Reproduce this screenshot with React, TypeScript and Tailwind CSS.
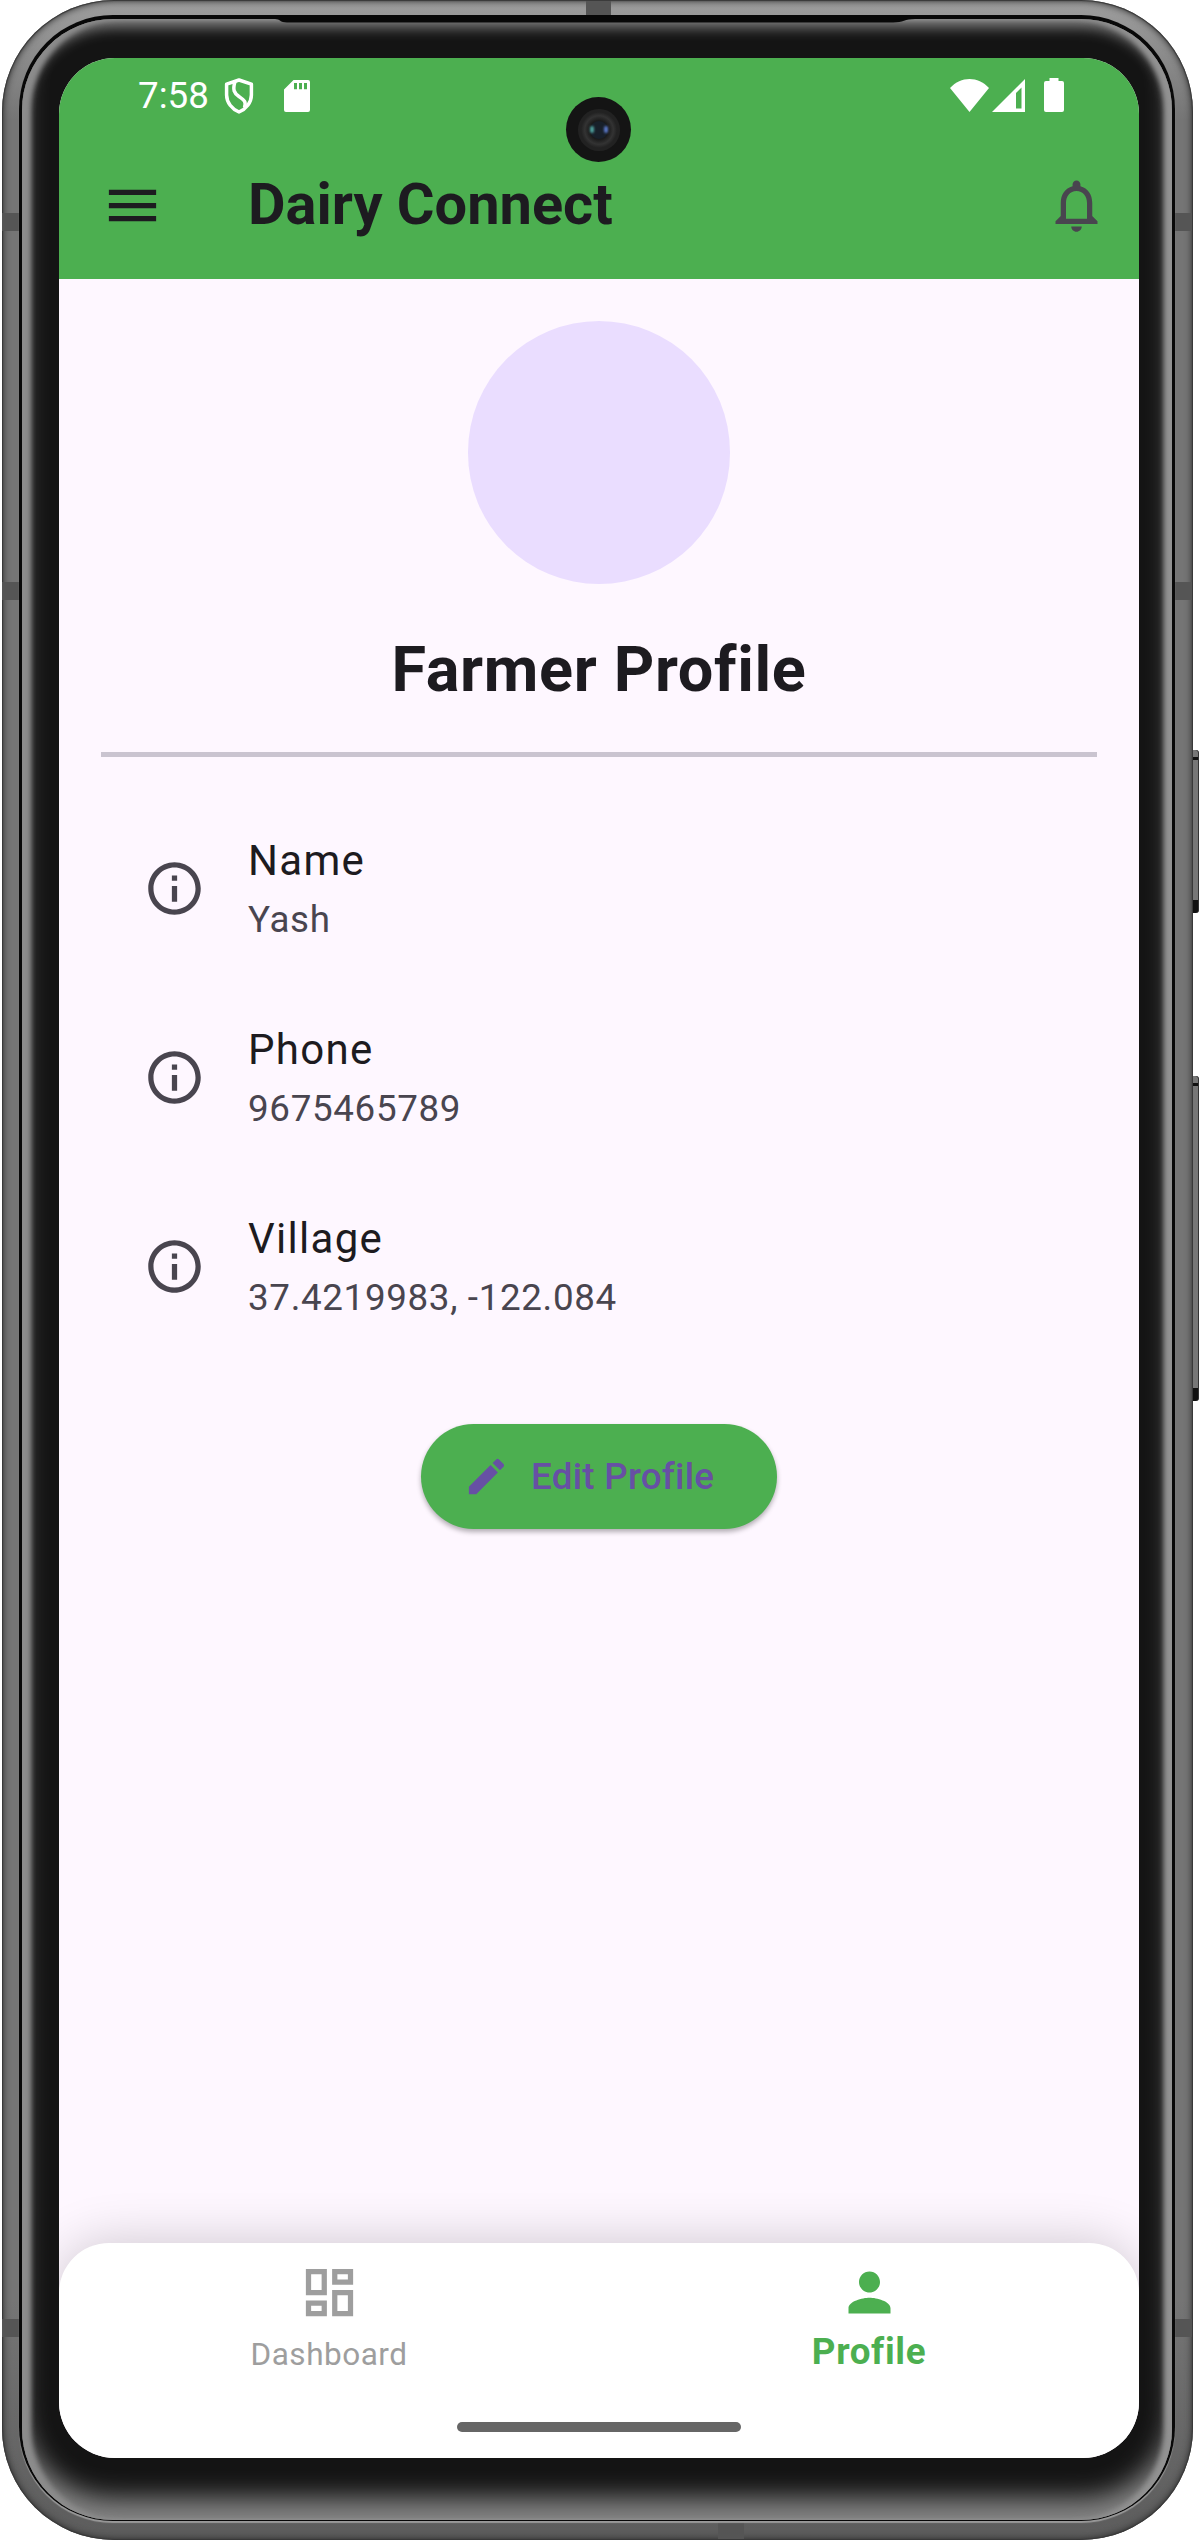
import React from "react";

const INFO =
  "M11 7h2v2h-2zm0 4h2v6h-2zm1-9C6.48 2 2 6.48 2 12s4.48 10 10 10 10-4.48 10-10S17.52 2 12 2zm0 18c-4.41 0-8-3.59-8-8s3.59-8 8-8 8 3.59 8 8-3.59 8-8 8z";
const MENU = "M3 18h18v-2H3v2zm0-5h18v-2H3v2zm0-7v2h18V6H3z";
const BELL =
  "M12 22c1.1 0 2-.9 2-2h-4c0 1.1.9 2 2 2zm6-6v-5c0-3.07-1.63-5.64-4.5-6.32V4c0-.83-.67-1.5-1.5-1.5s-1.5.67-1.5 1.5v.68C7.64 5.36 6 7.92 6 11v5l-2 2v1h16v-1l-2-2zm-2 1H8v-6c0-2.48 1.51-4.5 4-4.5s4 2.02 4 4.5v6z";
const EDIT =
  "M3 17.25V21h3.75L17.81 9.94l-3.75-3.75L3 17.25zM20.71 7.04c.39-.39.39-1.02 0-1.41l-2.34-2.34c-.39-.39-1.02-.39-1.41 0l-1.83 1.83 3.75 3.75 1.83-1.83z";
const DASHBOARD =
  "M19 5v2h-4V5h4M9 5v6H5V5h4m10 8v6h-4v-6h4M9 17v2H5v-2h4M21 3h-8v6h8V3zM11 3H3v10h8V3zm10 8h-8v10h8V11zm-10 4H3v6h8v-6z";
const PERSON =
  "M12 12c2.21 0 4-1.79 4-4s-1.79-4-4-4-4 1.79-4 4 1.79 4 4 4zm0 2c-2.67 0-8 1.34-8 4v2h16v-2c0-2.66-5.33-4-8-4z";

function Icon({ d, className }: { d: string; className: string }) {
  return (
    <svg viewBox="0 0 24 24" fill="currentColor" className={`shrink-0 ${className}`}>
      <path d={d} />
    </svg>
  );
}

function StatusBar() {
  return (
    <div className="flex h-[74px] items-center pl-[79px] pr-[75px] text-white">
      <span className="mt-[1px] w-[86px] text-[36.75px] leading-[42px]">7:58</span>
      <svg viewBox="0 0 30 36" className="mt-[2px] h-9 w-[30px]" fill="none" stroke="currentColor" strokeWidth="3.5" strokeLinejoin="round">
        <path d="M15 2 L27.4 6.2 V17 C27.4 24.5 22 31 15 34 C8 31 2.6 24.5 2.6 17 V6.2 Z" />
        <path d="M11 3.5 C8.5 12 10 15 15 18.5 C20 22 22.5 23.5 20.5 29.5" />
      </svg>
      <svg viewBox="0 0 26 32" className="ml-[30px] mt-[1px] h-8 w-[26px]" fill="currentColor">
        <path fillRule="evenodd" d="M9.5 0H24a2 2 0 0 1 2 2v28a2 2 0 0 1-2 2H2a2 2 0 0 1-2-2V9.500zM10 3v6.300h3V3zM15 3v6.300h3V3zM20 3v6.300h3V3z" />
      </svg>
      <div className="ml-auto flex items-center">
        <svg viewBox="0 0 39 33" className="h-[33px] w-[39px]" fill="currentColor">
          <path d="M0 9C11-3 28-3 39 9L19.500 33z" />
        </svg>
        <svg viewBox="0 0 33 33" className="ml-[3px] h-[33px] w-[33px]" fill="currentColor">
          <path fillRule="evenodd" d="M33 0V33H0zM24 14V29.500H29.500V8.500z" />
        </svg>
        <svg viewBox="0 0 20 34" className="ml-[19px] h-[34px] w-5" fill="currentColor">
          <path d="M5.500 0h9v3H18a2 2 0 0 1 2 2v27a2 2 0 0 1-2 2H2a2 2 0 0 1-2-2V5a2 2 0 0 1 2-2h3.500z" />
        </svg>
      </div>
    </div>
  );
}

function Header() {
  return (
    <header className="h-[221px] bg-[#4caf50]">
      <StatusBar />
      <div className="flex h-[147px] items-center pl-[42px] pr-[31px]">
        <Icon d={MENU} className="h-[63px] w-[63px] text-[#1d1b20]" />
        <h1 className="mb-[2px] ml-[84px] text-[57.75px] font-bold leading-[73px] text-[#1d1b20]">
          Dairy Connect
        </h1>
        <Icon d={BELL} className="ml-auto h-[63px] w-[63px] text-[#49454f]" />
      </div>
    </header>
  );
}

const DETAILS = [
  { label: "Name", value: "Yash" },
  { label: "Phone", value: "9675465789" },
  { label: "Village", value: "37.4219983, -122.084" },
];

function Profile() {
  return (
    <main className="flex flex-1 flex-col items-center px-[42px] pt-[42px]">
      <div className="h-[262.5px] w-[262.5px] shrink-0 rounded-full bg-[#eaddff]" />
      <h2 className="mt-[46px] text-[63px] font-bold leading-[80px] tracking-[0.66px] text-[#1d1b20]">
        Farmer Profile
      </h2>
      <div className="mt-[42.5px] h-[5px] w-full bg-[#cac4d0]" />
      <ul className="mt-[36.5px] w-full">
        {DETAILS.map(({ label, value }) => (
          <li key={label} className="flex h-[189px] items-center pl-[42px]">
            <Icon d={INFO} className="h-[63px] w-[63px] text-[#49454f]" />
            <div className="mb-[1px] ml-[42px]">
              <div className="text-[42px] leading-[63px] tracking-[1.3px] text-[#1d1b20]">{label}</div>
              <div className="mt-[1px] text-[36.75px] leading-[54px] tracking-[0.66px] text-[#49454f]">{value}</div>
            </div>
          </li>
        ))}
      </ul>
      <button className="mt-[63.5px] flex h-[105px] w-[356px] items-center rounded-full bg-[#4caf50] pl-[42px] text-[36.75px] font-medium leading-[53px] tracking-[0.26px] text-[#6750a4] shadow-[0_3px_5px_rgba(0,0,0,0.3)]">
        <Icon d={EDIT} className="mr-[21px] h-[47px] w-[47px]" />
        Edit Profile
      </button>
    </main>
  );
}

function BottomNav() {
  return (
    <nav className="flex h-[215px] flex-col items-center rounded-t-[50px] bg-white shadow-[0_0_52px_rgba(0,0,0,0.2)]">
      <div className="flex w-full">
        <div className="flex flex-1 flex-col items-center pt-[18px] text-[#9e9e9e]">
          <Icon d={DASHBOARD} className="h-[63px] w-[63px]" />
          <span className="mt-[10px] text-[31.5px] leading-[42px] tracking-[0.5px]">Dashboard</span>
        </div>
        <div className="flex flex-1 flex-col items-center pt-[18px] text-[#4caf50]">
          <Icon d={PERSON} className="h-[63px] w-[63px]" />
          <span className="mt-[7px] text-[36.75px] font-bold leading-[42px] tracking-[0.66px]">Profile</span>
        </div>
      </div>
      <div className="mb-[26px] mt-auto h-[10px] w-[284px] rounded-full bg-[#666]" />
    </nav>
  );
}

function SideButton({ className }: { className: string }) {
  return (
    <div className={`absolute left-[1191px] flex w-[8px] flex-col rounded-r-[3px] border-r border-[#333] bg-[#111] ${className}`}>
      <div className="h-[7px] rounded-tr-[3px] bg-[#777]" />
      <div className="mb-[13px] mt-[3px] flex-1 bg-[#777]" />
    </div>
  );
}

function AntennaBand({ className }: { className: string }) {
  return <div className={`absolute bg-[#555] ${className}`} />;
}

export default function App() {
  return (
    <div className="relative h-[2541px] w-[1200px] overflow-hidden bg-white font-['Roboto',sans-serif]">
      <SideButton className="top-[750px] h-[163px]" />
      <SideButton className="top-[1076px] h-[325px]" />
      <div className="relative ml-[1.5px] h-[2540px] w-[1191px] rounded-[112px] bg-[linear-gradient(#9e9e9e,#757575_120px,#757575_2300px,#5c5c5c)] pb-[19px] pl-[17.5px] pr-[17.5px] pt-[15px] shadow-[inset_0_0_7px_1px_#2d2d2d,inset_0_0_1px_1px_#444]">
        <AntennaBand className="left-[0.5px] top-[213px] h-[18px] w-[18px]" />
        <AntennaBand className="left-[0.5px] top-[582px] h-[18px] w-[18px]" />
        <AntennaBand className="left-[0.5px] top-[2319px] h-[18px] w-[18px]" />
        <AntennaBand className="right-[0.5px] top-[213px] h-[18px] w-[18px]" />
        <AntennaBand className="right-[0.5px] top-[582px] h-[18px] w-[18px]" />
        <AntennaBand className="right-[0.5px] top-[2319px] h-[18px] w-[18px]" />
        <AntennaBand className="left-[584px] top-[1px] h-[15px] w-[25px]" />
        <AntennaBand className="bottom-[1px] left-[716px] h-[18px] w-[26px]" />
        <div className="relative h-full rounded-[94px] bg-[#080808] pb-[1px] pl-[2.5px] pr-[3px] pt-[4px] shadow-[0_1.5px_1px_#999]">
          <div className="h-full rounded-[91px] bg-[#141414] pl-[37.5px] pt-[39px] shadow-[inset_9px_0_5px_#8c8c8c,inset_-8px_0_5px_#929292,inset_0_8px_14px_#858585,inset_0_-22px_26px_#858585]">
            <div className="relative flex h-[2400px] w-[1080px] flex-col overflow-hidden rounded-[56px] bg-[#fef7ff]">
              <Header />
              <Profile />
              <BottomNav />
              <div className="absolute left-[507px] top-[39px] flex h-[65px] w-[65px] items-center justify-center rounded-full bg-[#141414]">
                <div className="flex h-[42px] w-[42px] items-center justify-center rounded-full bg-[radial-gradient(circle_closest-side,#1b1b1b_45%,#333_68%,#222_85%)]">
                  <div className="flex h-[18px] w-[18px] items-center justify-between rounded-full bg-[#18202a]">
                    <div className="h-[7px] w-[4px] rounded-full bg-[#4fa09c] blur-[1px]" />
                    <div className="h-[7px] w-[4px] rounded-full bg-[#5a76c4] blur-[1px]" />
                  </div>
                </div>
              </div>
            </div>
          </div>
          <svg viewBox="0 0 640 7" className="absolute left-[256px] top-[1px] h-[7px] w-[640px]" fill="#080808">
            <path d="M0 0H640V3C630 3 628 6.500 618 6.500H12C5 6.500 5 3 0 3z" />
          </svg>
        </div>
      </div>
    </div>
  );
}
